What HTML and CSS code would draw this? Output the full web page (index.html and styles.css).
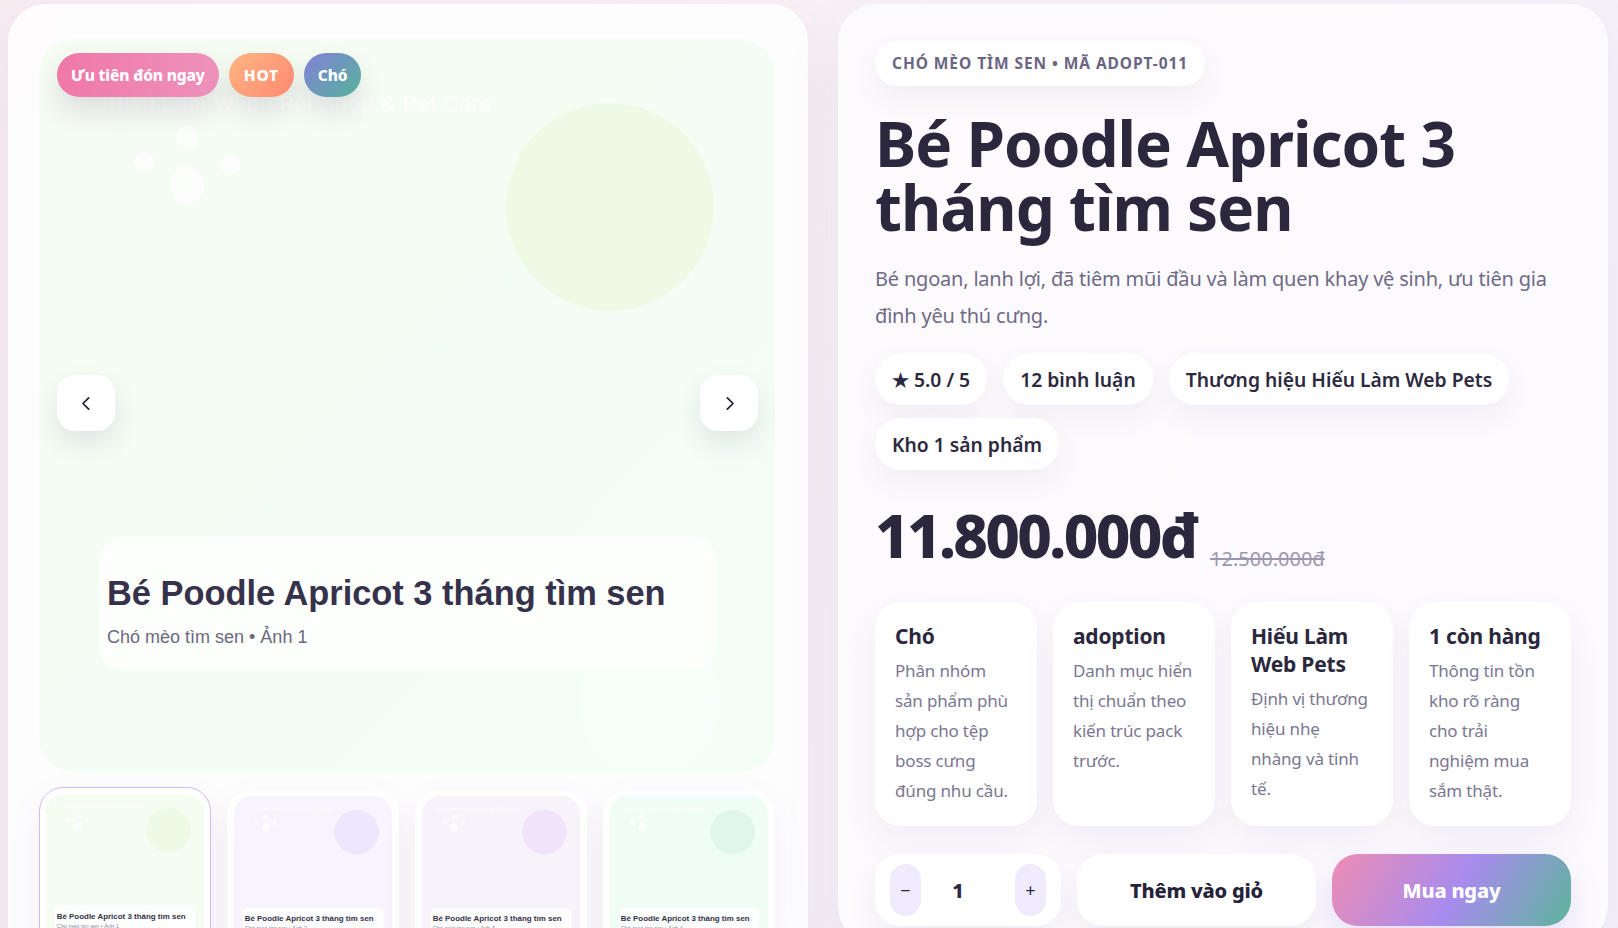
FILE: index.html
```html
<!DOCTYPE html>
<html lang="vi">
<head>
<meta charset="utf-8">
<title>Bé Poodle Apricot 3 tháng tìm sen</title>
<link rel="stylesheet" href="styles.css">
</head>
<body>
<main class="page">
  <section class="card gallery">
    <div class="hero">
      <svg class="art" viewBox="0 0 736 733" preserveAspectRatio="xMidYMid slice">
        <defs>
          <linearGradient id="bgA" x1="0" y1="0" x2="1" y2="1">
            <stop offset="0" stop-color="#f5fcf2"/>
            <stop offset="1" stop-color="#f3fef7"/>
          </linearGradient>
        </defs>
        <rect width="736" height="733" fill="url(#bgA)"/>
        <text x="69" y="72" class="art-brand">Hiếu Làm Web • Pet Shop &amp; Pet Care</text>
        <circle cx="571" cy="168" r="104" fill="#eefae6"/>
        <g fill="#ffffff" opacity="0.75">
          <circle cx="105" cy="123" r="10"/>
          <circle cx="148" cy="98" r="11"/>
          <circle cx="191" cy="126" r="10"/>
          <ellipse cx="148" cy="146" rx="17" ry="19"/>
        </g>
        <g fill="#ffffff" opacity="0.2">
          <ellipse cx="610" cy="660" rx="70" ry="80"/>
          <circle cx="585" cy="560" r="20"/>
          <circle cx="635" cy="560" r="20"/>
        </g>
        <rect x="60" y="497" width="618" height="135" rx="26" fill="#ffffff" opacity="0.78"/>
        <text x="68" y="566" class="art-title">Bé Poodle Apricot 3 tháng tìm sen</text>
        <text x="68" y="604" class="art-sub">Chó mèo tìm sen • Ảnh 1</text>
      </svg>
      <div class="badges">
        <span class="badge badge-pink">Ưu tiên đón ngay</span>
        <span class="badge badge-hot">HOT</span>
        <span class="badge badge-cat">Chó</span>
      </div>
      <button class="nav nav-prev" aria-label="Ảnh trước">
        <svg viewBox="0 0 24 24"><path d="M14.5 5.5l-6.5 6.5 6.5 6.5"/></svg>
      </button>
      <button class="nav nav-next" aria-label="Ảnh sau">
        <svg viewBox="0 0 24 24"><path d="M9.5 5.5l6.5 6.5-6.5 6.5"/></svg>
      </button>
    </div>

    <div class="thumbs">
      <button class="thumb is-active">
        <svg viewBox="0 0 736 736">
          <rect width="736" height="736" fill="#f5fcf2"/>
          <text x="69" y="72" class="art-brand">Hiếu Làm Web • Pet Shop &amp; Pet Care</text>
          <circle cx="571" cy="168" r="104" fill="#eefae5"/>
          <g fill="#ffffff" opacity="0.75"><circle cx="105" cy="123" r="10"/><circle cx="148" cy="98" r="11"/><circle cx="191" cy="126" r="10"/><ellipse cx="148" cy="146" rx="17" ry="19"/></g>
          <g fill="#ffffff" opacity="0.5"><ellipse cx="120" cy="735" rx="160" ry="70"/><ellipse cx="610" cy="670" rx="70" ry="80"/><circle cx="585" cy="570" r="20"/><circle cx="635" cy="570" r="20"/></g>
          <rect x="40" y="520" width="656" height="135" rx="26" fill="#ffffff" opacity="0.8"/>
          <text x="50" y="580" class="thumb-title">Bé Poodle Apricot 3 tháng tìm sen</text>
          <text x="50" y="625" class="thumb-sub">Chó mèo tìm sen • Ảnh 1</text>
        </svg>
      </button>
      <button class="thumb">
        <svg viewBox="0 0 736 736">
          <rect width="736" height="736" fill="#f8f4fe"/>
          <text x="69" y="72" class="art-brand">Hiếu Làm Web • Pet Shop &amp; Pet Care</text>
          <circle cx="571" cy="168" r="104" fill="#ede6fd"/>
          <g fill="#ffffff" opacity="0.75"><circle cx="105" cy="123" r="10"/><circle cx="148" cy="98" r="11"/><circle cx="191" cy="126" r="10"/><ellipse cx="148" cy="146" rx="17" ry="19"/></g>
          <g fill="#ffffff" opacity="0.5"><ellipse cx="120" cy="735" rx="160" ry="70"/><ellipse cx="610" cy="670" rx="70" ry="80"/><circle cx="585" cy="570" r="20"/><circle cx="635" cy="570" r="20"/></g>
          <rect x="40" y="520" width="656" height="135" rx="26" fill="#ffffff" opacity="0.8"/>
          <text x="50" y="580" class="thumb-title">Bé Poodle Apricot 3 tháng tìm sen</text>
          <text x="50" y="625" class="thumb-sub">Chó mèo tìm sen • Ảnh 2</text>
        </svg>
      </button>
      <button class="thumb">
        <svg viewBox="0 0 736 736">
          <rect width="736" height="736" fill="#f8f2fb"/>
          <text x="69" y="72" class="art-brand">Hiếu Làm Web • Pet Shop &amp; Pet Care</text>
          <circle cx="571" cy="168" r="104" fill="#f0e4fb"/>
          <g fill="#ffffff" opacity="0.75"><circle cx="105" cy="123" r="10"/><circle cx="148" cy="98" r="11"/><circle cx="191" cy="126" r="10"/><ellipse cx="148" cy="146" rx="17" ry="19"/></g>
          <g fill="#ffffff" opacity="0.5"><ellipse cx="120" cy="735" rx="160" ry="70"/><ellipse cx="610" cy="670" rx="70" ry="80"/><circle cx="585" cy="570" r="20"/><circle cx="635" cy="570" r="20"/></g>
          <rect x="40" y="520" width="656" height="135" rx="26" fill="#ffffff" opacity="0.8"/>
          <text x="50" y="580" class="thumb-title">Bé Poodle Apricot 3 tháng tìm sen</text>
          <text x="50" y="625" class="thumb-sub">Chó mèo tìm sen • Ảnh 3</text>
        </svg>
      </button>
      <button class="thumb">
        <svg viewBox="0 0 736 736">
          <rect width="736" height="736" fill="#f0fcf6"/>
          <text x="69" y="72" class="art-brand">Hiếu Làm Web • Pet Shop &amp; Pet Care</text>
          <circle cx="571" cy="168" r="104" fill="#e0f6ec"/>
          <g fill="#ffffff" opacity="0.75"><circle cx="105" cy="123" r="10"/><circle cx="148" cy="98" r="11"/><circle cx="191" cy="126" r="10"/><ellipse cx="148" cy="146" rx="17" ry="19"/></g>
          <g fill="#ffffff" opacity="0.5"><ellipse cx="120" cy="735" rx="160" ry="70"/><ellipse cx="610" cy="670" rx="70" ry="80"/><circle cx="585" cy="570" r="20"/><circle cx="635" cy="570" r="20"/></g>
          <rect x="40" y="520" width="656" height="135" rx="26" fill="#ffffff" opacity="0.8"/>
          <text x="50" y="580" class="thumb-title">Bé Poodle Apricot 3 tháng tìm sen</text>
          <text x="50" y="625" class="thumb-sub">Chó mèo tìm sen • Ảnh 4</text>
        </svg>
      </button>
    </div>
  </section>

  <section class="card info">
    <div class="eyebrow">CHÓ MÈO TÌM SEN • MÃ ADOPT-011</div>
    <h1 class="title">Bé Poodle Apricot 3 tháng tìm sen</h1>
    <p class="desc">Bé ngoan, lanh lợi, đã tiêm mũi đầu và làm quen khay vệ sinh, ưu tiên gia đình yêu thú cưng.</p>
    <div class="chips">
      <span class="chip">★ 5.0 / 5</span>
      <span class="chip">12 bình luận</span>
      <span class="chip">Thương hiệu Hiếu Làm Web Pets</span>
      <span class="chip">Kho 1 sản phẩm</span>
    </div>
    <div class="price-row">
      <span class="price">11.800.000đ</span>
      <span class="old-price">12.500.000đ</span>
    </div>
    <div class="features">
      <div class="feature">
        <h3>Chó</h3>
        <p>Phân nhóm sản phẩm phù hợp cho tệp boss cưng đúng nhu cầu.</p>
      </div>
      <div class="feature">
        <h3>adoption</h3>
        <p>Danh mục hiển thị chuẩn theo kiến trúc pack trước.</p>
      </div>
      <div class="feature">
        <h3>Hiếu Làm Web Pets</h3>
        <p>Định vị thương hiệu nhẹ nhàng và tinh tế.</p>
      </div>
      <div class="feature">
        <h3>1 còn hàng</h3>
        <p>Thông tin tồn kho rõ ràng cho trải nghiệm mua sắm thật.</p>
      </div>
    </div>
    <div class="actions">
      <div class="qty">
        <button class="qty-btn" aria-label="Giảm">−</button>
        <span class="qty-value">1</span>
        <button class="qty-btn" aria-label="Tăng">+</button>
      </div>
      <button class="btn btn-cart">Thêm vào giỏ</button>
      <button class="btn btn-buy">Mua ngay</button>
    </div>
  </section>
</main>
</body>
</html>
```
FILE: styles.css
```css
* { box-sizing: border-box; }

html, body {
  margin: 0;
  height: 928px;
  overflow: hidden;
}

body {
  background: linear-gradient(115deg, #f7ebf2 0%, #f8f1f6 45%, #f4f0fa 100%);
  font-family: "Noto Sans", "Open Sans", sans-serif;
  color: #2c2940;
}

button {
  font-family: inherit;
  border: 0;
  cursor: pointer;
}

.page {
  display: grid;
  grid-template-columns: 800px 770px;
  column-gap: 30px;
  padding: 4px 10px 0 8px;
  align-items: start;
}

.card {
  background: rgba(255, 255, 255, 0.86);
  border-radius: 38px;
  box-shadow: 0 24px 60px rgba(120, 90, 150, 0.08);
}

/* ---------- Gallery ---------- */
.gallery {
  padding: 35px 33px 40px 31px;
}

.hero {
  position: relative;
  height: 733px;
  border-radius: 36px;
  overflow: hidden;
}

.art {
  display: block;
  width: 100%;
  height: 100%;
}

.art-brand {
  font-family: "Liberation Sans", Arial, sans-serif;
  font-weight: 700;
  font-size: 22px;
  fill: #ffffff;
  opacity: 0.6;
}

.art-title {
  font-family: "Liberation Sans", Arial, sans-serif;
  font-weight: 700;
  font-size: 34.4px;
  fill: #36324b;
}

.art-sub {
  font-family: "Liberation Sans", Arial, sans-serif;
  font-size: 18px;
  fill: #6b6880;
}

.thumb-title {
  font-family: "Liberation Sans", Arial, sans-serif;
  font-weight: 700;
  font-size: 37px;
  fill: #36324b;
}

.thumb-sub {
  font-family: "Liberation Sans", Arial, sans-serif;
  font-size: 26px;
  fill: #8a8799;
}

.badges {
  position: absolute;
  left: 18px;
  top: 14px;
  display: flex;
  gap: 10px;
}

.badge {
  height: 44px;
  padding: 0 14px;
  border-radius: 999px;
  display: inline-flex;
  align-items: center;
  color: #fff;
  font-size: 15.5px;
  font-weight: 800;
  letter-spacing: -0.01em;
  box-shadow: 0 14px 26px rgba(90, 70, 110, 0.16);
}

.badge-pink { background: linear-gradient(90deg, #ef78a7, #ee92bb); }
.badge-hot {
  background: linear-gradient(135deg, #ffb482, #ff8a72);
  padding: 0 15px;
  letter-spacing: 0.05em;
}
.badge-cat { background: linear-gradient(135deg, #8380d8, #56b39a); }

.nav {
  position: absolute;
  top: 336px;
  width: 58px;
  height: 56px;
  border-radius: 18px;
  background: #ffffff;
  box-shadow: 0 12px 26px rgba(70, 60, 100, 0.12);
  display: flex;
  align-items: center;
  justify-content: center;
  padding: 0;
}

.nav svg {
  width: 21px;
  height: 21px;
  fill: none;
  stroke: #1f1d2b;
  stroke-width: 1.9;
  stroke-linecap: round;
  stroke-linejoin: round;
}

.nav-prev { left: 18px; }
.nav-next { right: 17px; }

.thumbs {
  display: grid;
  grid-template-columns: repeat(4, 1fr);
  gap: 16px;
  margin-top: 18px;
}

.thumb {
  background: #ffffff;
  padding: 4px 6px 6px;
  border-radius: 24px;
  border: 1px solid rgba(255, 255, 255, 0.9);
  box-shadow: 0 14px 34px rgba(90, 70, 130, 0.08);
}

.thumb svg {
  display: block;
  width: 100%;
  border-radius: 18px;
}

.thumb.is-active {
  border-color: #cbbcf4;
  padding-top: 6px;
  transform: translateY(-3px);
}

/* ---------- Info ---------- */
.info {
  padding: 37px 37px 0 37px;
  height: 940px;
  background: rgba(253, 251, 254, 0.9);
}

.eyebrow {
  display: inline-block;
  height: 45px;
  line-height: 45px;
  padding: 0 17px;
  background: #ffffff;
  border-radius: 999px;
  font-size: 15.5px;
  font-weight: 700;
  letter-spacing: 0.06em;
  color: #6a6582;
  box-shadow: 0 12px 28px rgba(90, 70, 130, 0.07);
}

.title {
  margin: 25px 0 0;
  font-size: 62px;
  line-height: 64px;
  font-weight: 700;
  letter-spacing: -0.016em;
  color: #2b283d;
}

.desc {
  margin: 21px 0 0;
  font-size: 20px;
  line-height: 37px;
  color: #6f6a86;
  letter-spacing: -0.01em;
}

.chips {
  display: flex;
  flex-wrap: wrap;
  gap: 13px 16px;
  margin-top: 19px;
}

.chip {
  height: 52px;
  padding: 0 17px;
  display: inline-flex;
  align-items: center;
  background: #ffffff;
  border-radius: 999px;
  font-size: 19.3px;
  font-weight: 600;
  color: #2c2940;
  box-shadow: 0 12px 28px rgba(90, 70, 130, 0.07);
}

.price-row {
  display: flex;
  align-items: baseline;
  gap: 14px;
  margin-top: 33px;
}

.price {
  font-size: 60px;
  line-height: 64px;
  font-weight: 800;
  letter-spacing: -0.045em;
  color: #2b283d;
}

.old-price {
  font-size: 20px;
  color: #9c97ae;
  text-decoration: line-through;
  position: relative;
  top: 8px;
}

.features {
  display: grid;
  grid-template-columns: repeat(4, 1fr);
  gap: 16px;
  margin-top: 35px;
}

.feature {
  background: #ffffff;
  border-radius: 26px;
  padding: 20px 21px 20px 20px;
  box-shadow: 0 16px 34px rgba(90, 70, 130, 0.07);
}

.feature h3 {
  margin: 0;
  font-size: 21px;
  line-height: 28px;
  font-weight: 700;
  letter-spacing: -0.01em;
  color: #2b283d;
}

.feature p {
  margin: 6px 0 0;
  font-size: 17px;
  line-height: 30px;
  letter-spacing: -0.01em;
  color: #7b7792;
}

.actions {
  display: grid;
  grid-template-columns: 186px 1fr 1fr;
  gap: 16px;
  margin-top: 28px;
}

.qty {
  height: 72px;
  background: #ffffff;
  border-radius: 24px;
  padding: 10px 15px;
  display: flex;
  align-items: center;
  justify-content: space-between;
  box-shadow: 0 14px 30px rgba(90, 70, 130, 0.07);
}

.qty-btn {
  width: 31px;
  height: 52px;
  border-radius: 16px;
  background: #efebfd;
  color: #2c2940;
  font-size: 18px;
  padding: 0;
}

.qty-value {
  font-size: 20px;
  font-weight: 800;
  margin-right: 20px;
}

.btn {
  height: 72px;
  border-radius: 26px;
  font-size: 20px;
  font-weight: 800;
  letter-spacing: -0.01em;
}

.btn-cart {
  background: #ffffff;
  color: #25223a;
  box-shadow: 0 14px 30px rgba(90, 70, 130, 0.07);
}

.btn-buy {
  background: linear-gradient(120deg, #ee8db4 0%, #a88bee 52%, #5db59c 100%);
  color: #ffffff;
  box-shadow: 0 14px 30px rgba(150, 120, 220, 0.2);
}
```
